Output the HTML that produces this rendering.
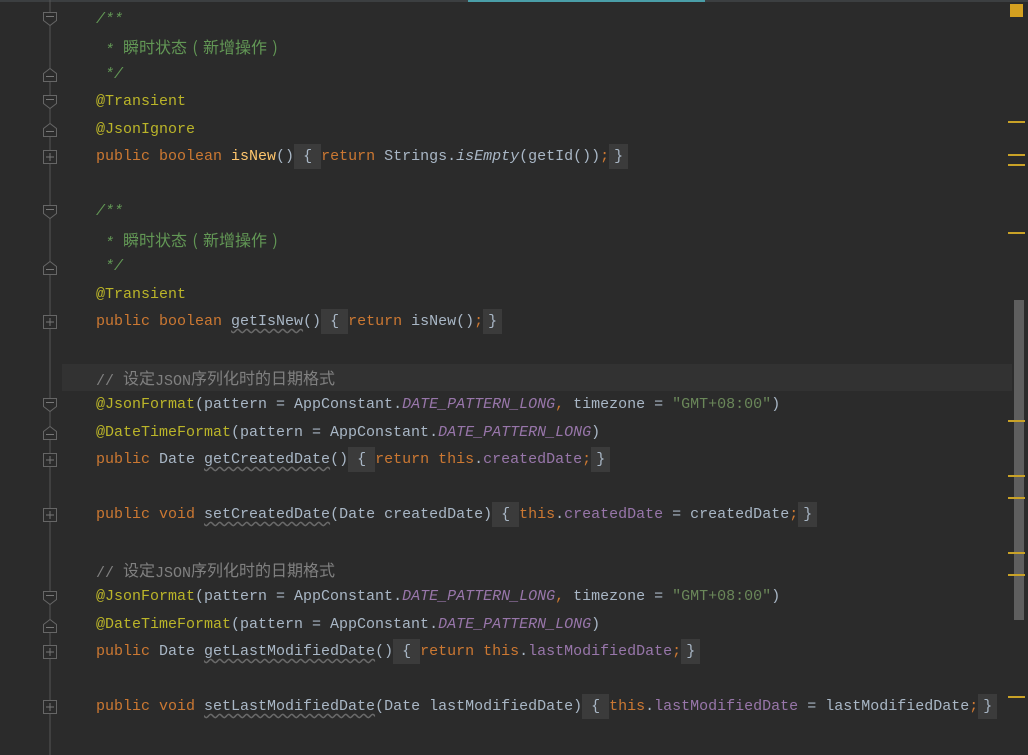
<!DOCTYPE html>
<html><head><meta charset="utf-8"><style>
body{margin:0;width:1028px;height:755px;background:#2b2b2b;overflow:hidden;position:relative;font-family:"Liberation Mono","Noto Sans CJK SC",monospace;font-size:15px;color:#a9b7c6}
.l{position:absolute;left:96px;height:27px;line-height:27px;white-space:pre}
.k{color:#cc7832}.a{color:#bbb529}.d{color:#629755;font-style:italic}.c{color:#808080}
.s{color:#6a8759}.p{color:#9876aa;font-style:italic}.f{color:#9876aa}.m{color:#ffc66d}
.w{text-decoration:underline wavy #6a6a6a;text-underline-offset:3px}
.b{background:#3b3b3b;padding:4px 9px 4px 0}
.e{background:#3b3b3b;padding:4px 5px 4px 5px;margin-left:0}
.z{font-family:"Noto Sans CJK SC",sans-serif;font-size:16px;font-style:normal;vertical-align:1px}
.pp{display:inline-block;width:16px;text-align:center}
.cur{position:absolute;left:62px;top:364px;width:950px;height:27px;background:#323232}
.mk{position:absolute;left:1008px;width:17px;height:2px;background:#c9a227}
</style></head><body>
<div style="position:absolute;left:0;top:0;width:1028px;height:2px;background:#3c3f41"></div>
<div style="position:absolute;left:468px;top:0;width:237px;height:2px;background:#4a9ea8"></div>
<div class="cur"></div>
<svg style="position:absolute;left:0;top:0" width="70" height="755">
<line x1="50" y1="0" x2="50" y2="755" stroke="#555" stroke-width="1"/>
<g fill="#2b2b2b" stroke="#666" stroke-width="1">
<path d="M43.5 12.5h13v8l-6.5 5l-6.5-5z"/><path d="M43.5 81.5h13v-8l-6.5-5l-6.5 5z"/>
<path d="M43.5 95.5h13v8l-6.5 5l-6.5-5z"/><path d="M43.5 136.5h13v-8l-6.5-5l-6.5 5z"/>
<path d="M43.5 205.5h13v8l-6.5 5l-6.5-5z"/><path d="M43.5 274.5h13v-8l-6.5-5l-6.5 5z"/>
<path d="M43.5 398.5h13v8l-6.5 5l-6.5-5z"/><path d="M43.5 439.5h13v-8l-6.5-5l-6.5 5z"/>
<path d="M43.5 591.5h13v8l-6.5 5l-6.5-5z"/><path d="M43.5 632.5h13v-8l-6.5-5l-6.5 5z"/>
<rect x="43.5" y="150.5" width="13" height="13"/><rect x="43.5" y="315.5" width="13" height="13"/>
<rect x="43.5" y="453.5" width="13" height="13"/><rect x="43.5" y="508.5" width="13" height="13"/>
<rect x="43.5" y="645.5" width="13" height="13"/><rect x="43.5" y="700.5" width="13" height="13"/>
</g>
<g stroke="#777"><path d="M46 16.5h8M46 76.5h8M46 99.5h8M46 131.5h8M46 209.5h8M46 269.5h8M46 402.5h8M46 434.5h8M46 595.5h8M46 627.5h8"/>
<path d="M46 157h8M50 153v8M46 322h8M50 318v8M46 460h8M50 456v8M46 515h8M50 511v8M46 652h8M50 648v8M46 707h8M50 703v8"/></g>
</svg>
<div class="l d" style="top:6px">/**</div>
<div class="l d" style="top:33px"> * <span class="z">瞬时状态<span class="pp">(</span>新增操作<span class="pp">)</span></span></div>
<div class="l d" style="top:61px"> */</div>
<div class="l a" style="top:88px">@Transient</div>
<div class="l a" style="top:116px">@JsonIgnore</div>
<div class="l" style="top:143px"><span class="k">public boolean </span><span class="m">isNew</span>()<span class="b"> {</span><span class="k">return</span> Strings.<i>isEmpty</i>(getId())<span class="k">;</span><span class="e">}</span></div>
<div class="l d" style="top:198px">/**</div>
<div class="l d" style="top:226px"> * <span class="z">瞬时状态<span class="pp">(</span>新增操作<span class="pp">)</span></span></div>
<div class="l d" style="top:253px"> */</div>
<div class="l a" style="top:281px">@Transient</div>
<div class="l" style="top:308px"><span class="k">public boolean </span><span class="w">getIsNew</span>()<span class="b"> {</span><span class="k">return</span> isNew()<span class="k">;</span><span class="e">}</span></div>
<div class="l c" style="top:364px">// <span class="z">设定</span>JSON<span class="z">序列化时的日期格式</span></div>
<div class="l" style="top:391px"><span class="a">@JsonFormat</span>(pattern = AppConstant.<span class="p">DATE_PATTERN_LONG</span><span class="k">,</span> timezone = <span class="s">"GMT+08:00"</span>)</div>
<div class="l" style="top:419px"><span class="a">@DateTimeFormat</span>(pattern = AppConstant.<span class="p">DATE_PATTERN_LONG</span>)</div>
<div class="l" style="top:446px"><span class="k">public </span>Date <span class="w">getCreatedDate</span>()<span class="b"> {</span><span class="k">return this</span>.<span class="f">createdDate</span><span class="k">;</span><span class="e">}</span></div>
<div class="l" style="top:501px"><span class="k">public void </span><span class="w">setCreatedDate</span>(Date createdDate)<span class="b"> {</span><span class="k">this</span>.<span class="f">createdDate</span> = createdDate<span class="k">;</span><span class="e">}</span></div>
<div class="l c" style="top:556px">// <span class="z">设定</span>JSON<span class="z">序列化时的日期格式</span></div>
<div class="l" style="top:583px"><span class="a">@JsonFormat</span>(pattern = AppConstant.<span class="p">DATE_PATTERN_LONG</span><span class="k">,</span> timezone = <span class="s">"GMT+08:00"</span>)</div>
<div class="l" style="top:611px"><span class="a">@DateTimeFormat</span>(pattern = AppConstant.<span class="p">DATE_PATTERN_LONG</span>)</div>
<div class="l" style="top:638px"><span class="k">public </span>Date <span class="w">getLastModifiedDate</span>()<span class="b"> {</span><span class="k">return this</span>.<span class="f">lastModifiedDate</span><span class="k">;</span><span class="e">}</span></div>
<div class="l" style="top:693px"><span class="k">public void </span><span class="w">setLastModifiedDate</span>(Date lastModifiedDate)<span class="b"> {</span><span class="k">this</span>.<span class="f">lastModifiedDate</span> = lastModifiedDate<span class="k">;</span><span class="e">}</span></div>
<div style="position:absolute;left:1014px;top:300px;width:10px;height:320px;background:#5f5f5f"></div>
<div style="position:absolute;left:1010px;top:4px;width:13px;height:13px;background:#d4a020"></div>
<div class="mk" style="top:121px"></div><div class="mk" style="top:154px"></div><div class="mk" style="top:164px"></div>
<div class="mk" style="top:232px"></div><div class="mk" style="top:420px"></div><div class="mk" style="top:475px"></div>
<div class="mk" style="top:497px"></div><div class="mk" style="top:552px"></div><div class="mk" style="top:574px"></div>
<div class="mk" style="top:696px"></div>
</body></html>
